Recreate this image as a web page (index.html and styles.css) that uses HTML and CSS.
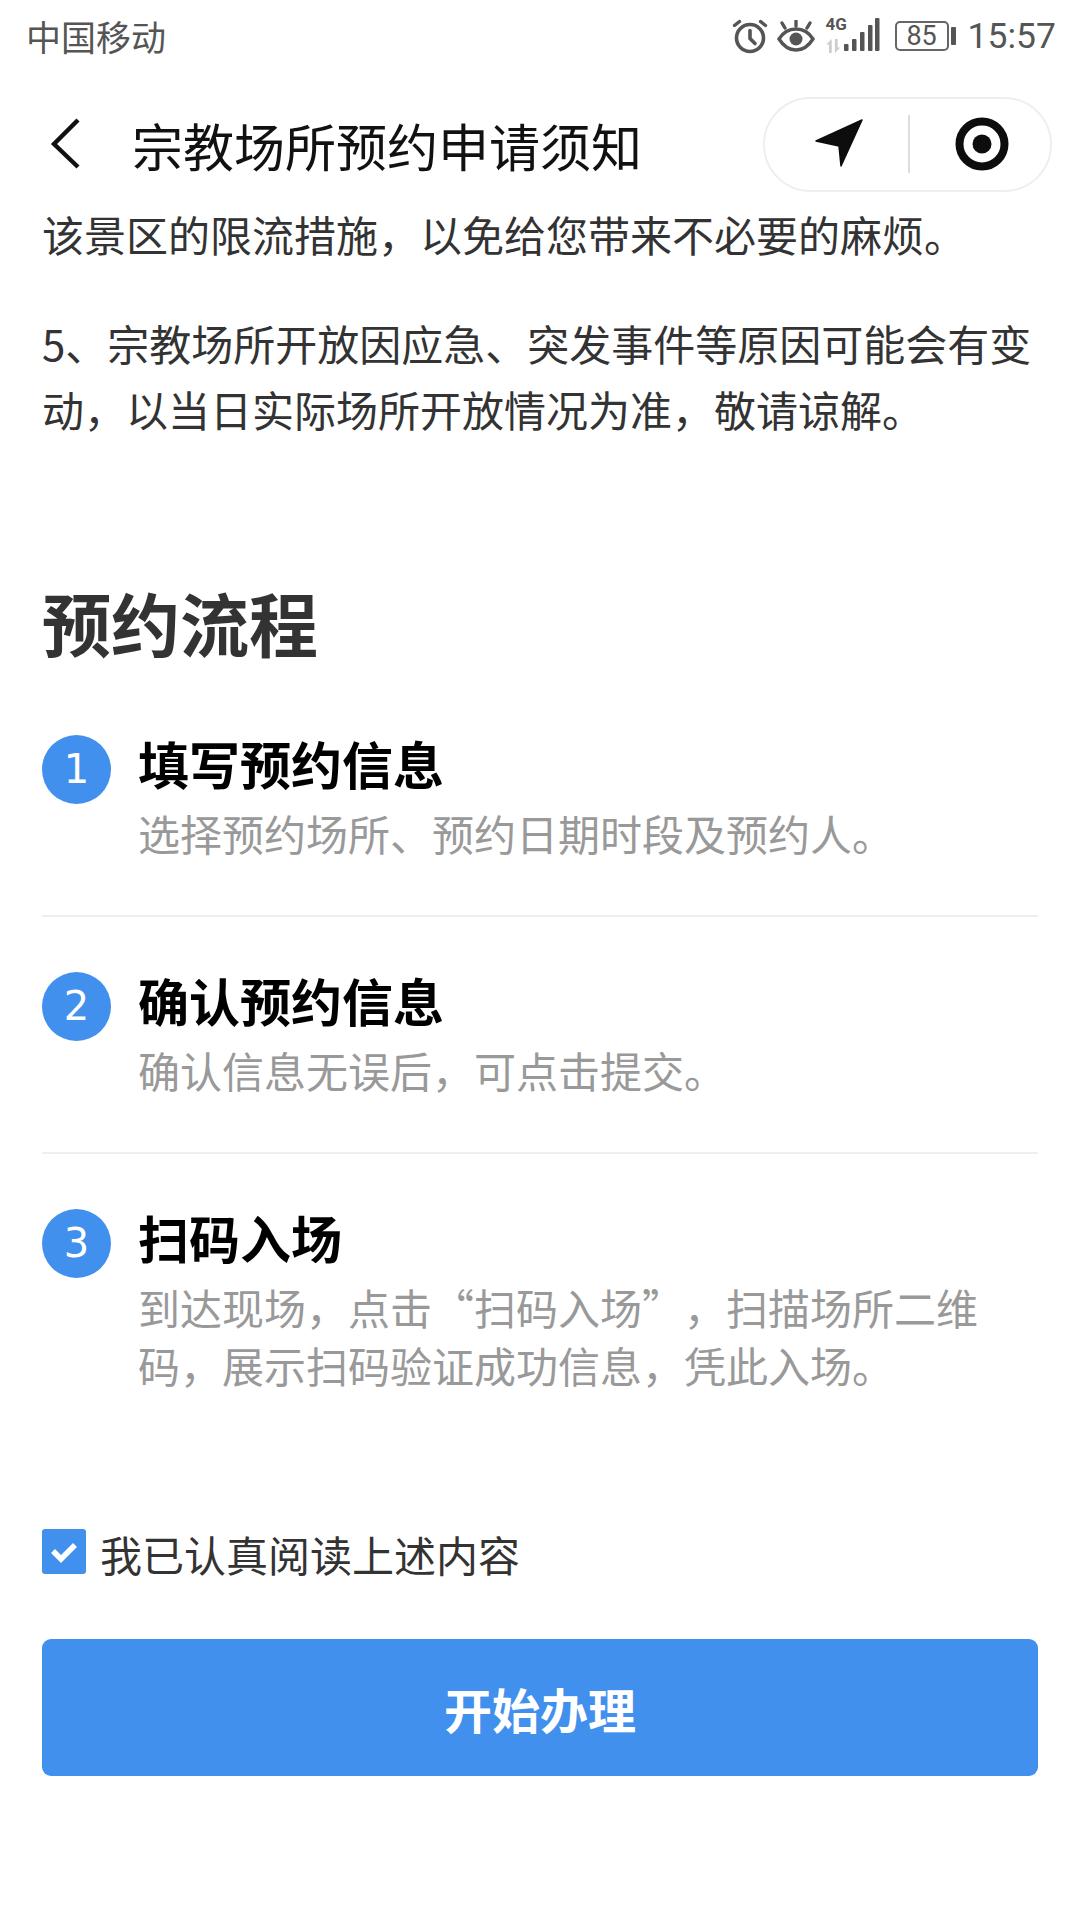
FILE: index.html
```html
<!DOCTYPE html>
<html lang="zh-CN">
<head>
<meta charset="utf-8">
<title>宗教场所预约申请须知</title>
<link rel="stylesheet" href="styles.css">
</head>
<body>
<div class="phone">
  <header class="status">
    <span class="carrier">中国移动</span>
    <div class="status-icons">
      <svg class="i-alarm" width="38" height="36" viewBox="0 0 38 36" fill="none" stroke="#555" stroke-width="3.6" stroke-linecap="round"><circle cx="19" cy="20" r="13.5"/><path d="M19 12.5V20.5L24 25.5"/><path d="M3.5 7.5 8.5 3.5M34.5 7.5 29.5 3.5" stroke-width="3.4"/></svg>
      <svg class="i-eye" width="38" height="32" viewBox="0 0 38 32" fill="none" stroke="#555" stroke-width="3.4" stroke-linecap="round"><path d="M2 19C7 11 13 9 19 9S31 11 36 19C31 27 25 30 19 30S7 27 2 19Z"/><circle cx="19" cy="19" r="6.5" fill="#555" stroke="none"/><path d="M8 8 5 3M19 6V1M30 8 33 3"/></svg>
      <div class="signal">
        <span class="net">4G</span>
        <svg class="i-arrows" width="20" height="14" viewBox="0 0 18 13" fill="#ccc"><path d="M5 0V13H2.5V5H0ZM8 0H10.5V8H13L8 13Z"/></svg>
        <svg class="i-bars" width="36" height="33" viewBox="0 0 36 33" fill="#555"><rect x="0" y="26" width="4.5" height="7" rx="1"/><rect x="8" y="21" width="4.5" height="12" rx="1"/><rect x="16" y="14" width="4.5" height="19" rx="1"/><rect x="24" y="7" width="4.5" height="26" rx="1"/><rect x="31" y="0" width="4.5" height="33" rx="1"/></svg>
      </div>
      <div class="battery"><span class="battery-box">85</span><span class="battery-nib"></span></div>
      <span class="clock">15:57</span>
    </div>
  </header>

  <nav class="nav">
    <svg class="back" width="34" height="54" viewBox="0 0 34 54" fill="none" stroke="#111" stroke-width="4.4"><path d="M29 3 5 27 29 50"/></svg>
    <h1 class="nav-title">宗教场所预约申请须知</h1>
    <div class="capsule">
      <span class="capsule-cell capsule-locate">
        <svg width="50" height="50" viewBox="0 0 50 50" fill="#0d0d0d"><path d="M47 1 1 22 24 27 26 47Z" stroke="#0d0d0d" stroke-width="1.5" stroke-linejoin="round"/></svg>
      </span>
      <span class="capsule-line"></span>
      <span class="capsule-cell capsule-target">
        <svg width="54" height="54" viewBox="0 0 54 54"><circle cx="27" cy="27" r="22.5" fill="none" stroke="#0d0d0d" stroke-width="8"/><circle cx="27" cy="27" r="9.5" fill="#0d0d0d"/></svg>
      </span>
    </div>
  </nav>

  <main class="content">
    <p class="para para-first">该景区的限流措施，以免给您带来不必要的麻烦。</p>
    <p class="para">5、宗教场所开放因应急、突发事件等原因可能会有变动，以当日实际场所开放情况为准，敬请谅解。</p>

    <h2 class="section-title">预约流程</h2>

    <ol class="steps">
      <li class="step">
        <span class="step-num">1</span>
        <div class="step-body">
          <h3 class="step-title">填写预约信息</h3>
          <p class="step-desc">选择预约场所、预约日期时段及预约人。</p>
        </div>
      </li>
      <li class="step">
        <span class="step-num">2</span>
        <div class="step-body">
          <h3 class="step-title">确认预约信息</h3>
          <p class="step-desc">确认信息无误后，可点击提交。</p>
        </div>
      </li>
      <li class="step">
        <span class="step-num">3</span>
        <div class="step-body">
          <h3 class="step-title">扫码入场</h3>
          <p class="step-desc">到达现场，点击“扫码入场”，扫描场所二维码，展示扫码验证成功信息，凭此入场。</p>
        </div>
      </li>
    </ol>

    <label class="agree">
      <span class="checkbox"><svg width="28" height="24" viewBox="0 0 28 24" fill="none" stroke="#fff" stroke-width="5.5"><path d="M3 11 11 19 25 5"/></svg></span>
      <span class="agree-text">我已认真阅读上述内容</span>
    </label>

    <button class="primary" type="button">开始办理</button>
  </main>
</div>
</body>
</html>
```

FILE: styles.css
```css
* { box-sizing: border-box; margin: 0; padding: 0; }
html, body { background: #fff; }
body { font-family: "Noto Sans CJK SC", "Noto Sans", sans-serif; color: #333; text-spacing-trim: space-all; }
.phone { width: 1080px; height: 1920px; overflow: hidden; background: #fff; display: flex; flex-direction: column; }

.status { height: 72px; flex: none; display: flex; align-items: center; justify-content: space-between; padding: 0 24px 0 26px; color: #555; }
.carrier { font-size: 35px; line-height: 72px; }
.status-icons { display: flex; align-items: center; }
.i-alarm { margin-right: 8px; }
.i-eye { margin-right: 11px; }
.signal { position: relative; width: 54px; height: 36px; margin-right: 15px; }
.net { position: absolute; left: 0; top: -3px; font: 700 17px/19px "Roboto", sans-serif; color: #555; }
.i-arrows { position: absolute; left: 0; top: 21px; }
.i-bars { position: absolute; right: 0; top: 0; }
.battery { display: flex; align-items: center; margin-right: 12px; }
.battery-box { width: 54px; height: 30px; border: 2px solid #666; border-radius: 5px; font: 400 27px/26px "Roboto", sans-serif; text-align: center; color: #555; }
.battery-nib { width: 5px; height: 18px; margin-left: 2px; background: #555; border-radius: 1px; }
.clock { font: 400 35.5px/72px "Roboto", sans-serif; color: #555; }

.nav { height: 129px; flex: none; display: flex; align-items: center; padding: 15px 28px 0 49px; }
.back { flex: none; margin-right: 49px; }
.nav-title { flex: 1; font-size: 51px; font-weight: 400; line-height: 70px; color: #111; white-space: nowrap; padding-top: 2px; }
.capsule { flex: none; width: 289px; height: 95px; border: 2px solid #eee; border-radius: 48px; display: flex; align-items: center; }
.capsule-cell { flex: 1 1 0; display: flex; align-items: center; justify-content: center; }
.capsule-locate { padding-left: 7px; }
.capsule-target { padding-left: 5px; }
.capsule-line { width: 2px; height: 58px; background: #ddd; }

.content { padding: 0 42px; flex: 1; display: flex; flex-direction: column; }
.para { font-size: 42px; line-height: 66px; color: #333; margin-top: 43px; }
.para-first { margin-top: 0; }
.section-title { font-size: 69px; font-weight: 700; line-height: 90px; color: #333; margin-top: 135px; }

.steps { list-style: none; margin-top: 68px; }
.step { display: flex; gap: 27px; padding: 0 0 53px; margin-bottom: 55px; border-bottom: 2px solid #eee; }
.step:last-child { border-bottom: 0; margin-bottom: 0; }
.step-num { flex: none; width: 69px; height: 69px; border-radius: 50%; background: #4290ee; color: #fff; font: 400 40px/69px "DejaVu Sans", sans-serif; text-align: center; }
.step-body { margin-top: -4px; width: 860px; }
.step-title { font-size: 51px; font-weight: 700; line-height: 64px; color: #000; }
.step-desc { font-size: 42px; line-height: 58px; color: #999; margin-top: 9px; }

.agree { display: flex; align-items: center; gap: 14px; margin-top: 73px; }
.checkbox { flex: none; width: 44px; height: 45px; border-radius: 3px; background: #4290ee; display: flex; align-items: center; justify-content: center; }
.agree-text { font-size: 42px; line-height: 58px; color: #333; margin-top: 5px; }

.primary { display: block; width: 996px; height: 137px; margin-top: 56px; border: 0; border-radius: 9px; background: #4290ee; color: #fff; font-family: inherit; font-size: 48px; font-weight: 700; }
```
